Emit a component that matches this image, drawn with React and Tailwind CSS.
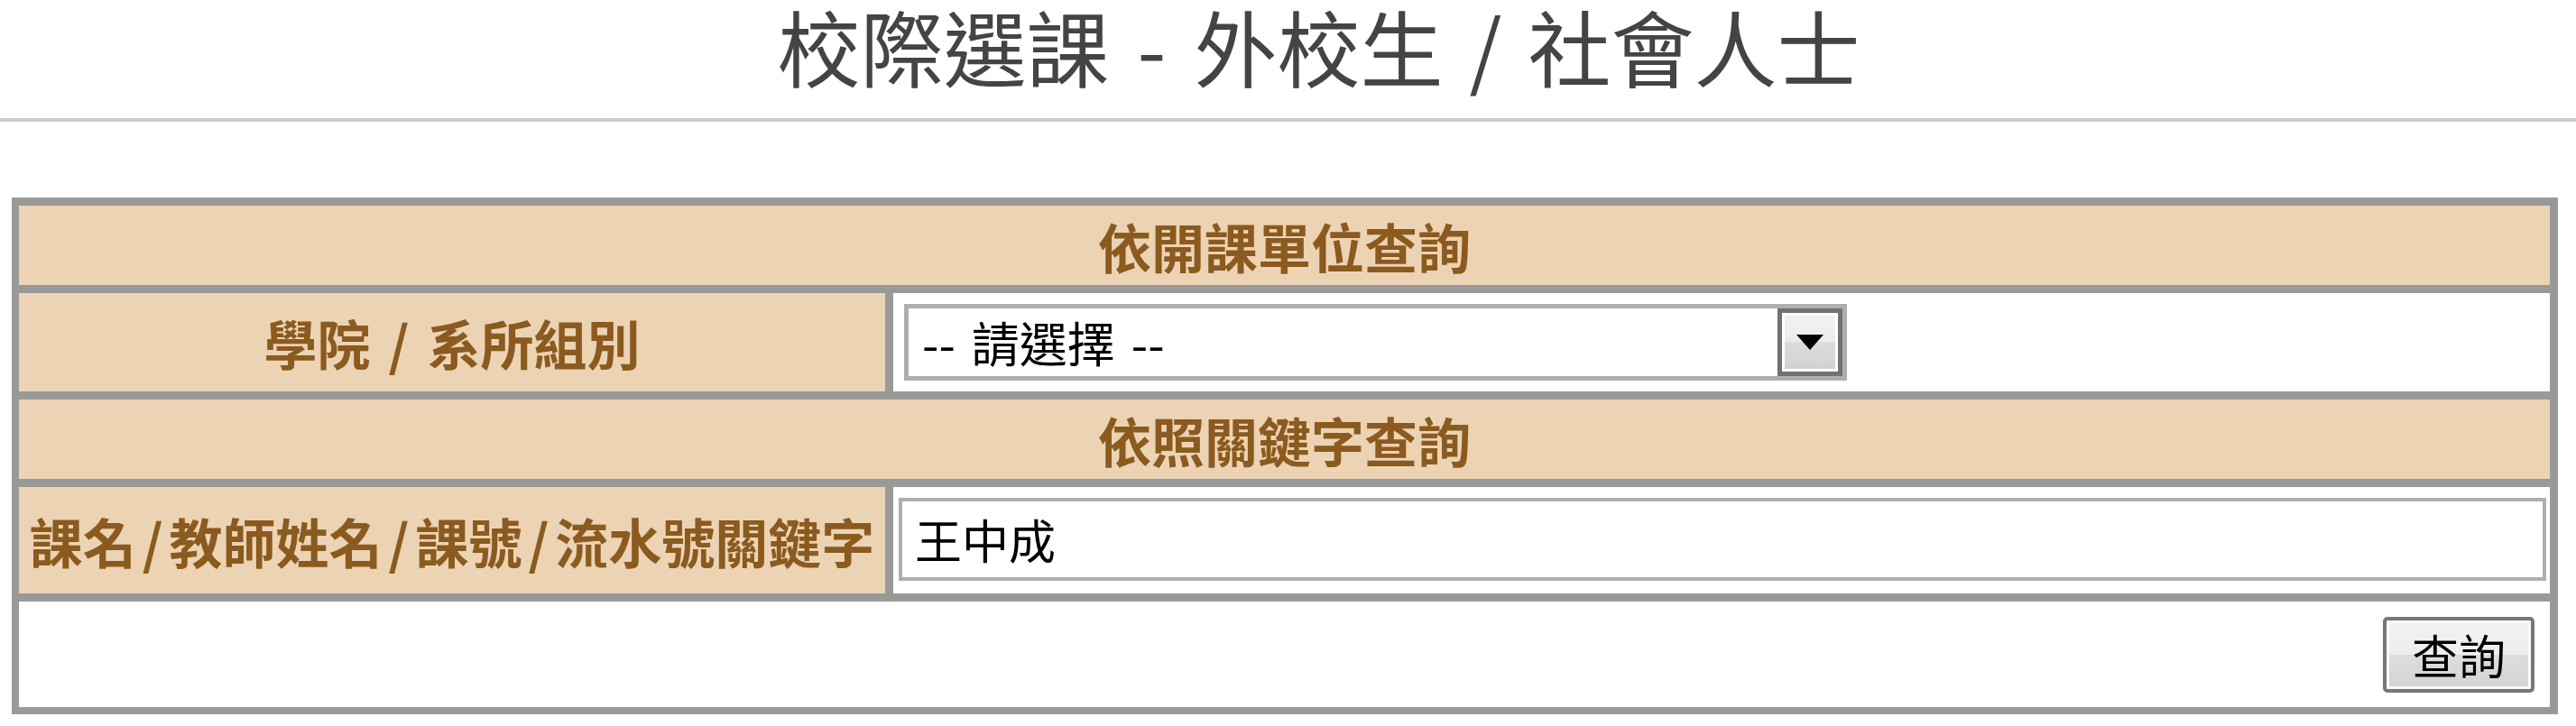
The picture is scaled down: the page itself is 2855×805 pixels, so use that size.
const label = "flex items-center justify-center bg-[#ebd3b4] text-[59px] font-bold leading-none text-[#8b5a1e]";

function Sep({ children, w }) {
  return <span className={w}>{children}</span>;
}

function FakeSelect() {
  return (
    <div className="flex h-[85px] w-[1045px] items-center border-[5px] border-[#adadb3] bg-white">
      <span className="flex flex-1 items-center gap-[18px] pl-[15px] text-[53px] leading-none text-black">
        <span>--</span>
        <span>請選擇</span>
        <span>--</span>
      </span>
      <div className="flex h-full w-[72px] items-center justify-center border-[5px] border-[#717171] bg-white p-[3px]">
        <div className="flex h-full w-full items-center justify-center bg-[linear-gradient(#f1f1f1_0%,#ececec_50%,#dcdcdc_50%,#d2d2d2_100%)]">
          <svg width="30" height="18" viewBox="0 0 30 18">
            <polygon points="0,0 30,0 15,17" fill="#000" />
          </svg>
        </div>
      </div>
    </div>
  );
}

export default function App() {
  return (
    <div className="min-h-screen bg-white" style={{ fontFamily: '"Noto Sans CJK TC", "Liberation Sans", sans-serif' }}>
      <div className="flex h-[135px] justify-center border-b-4 border-[#cccccc] pl-[68px]">
        <h1 className="flex text-[92px] font-normal leading-[100px] text-[#444444]">
          <span>校際選課</span>
          <Sep w="px-[31px]">-</Sep>
          <span>外校生</span>
          <Sep w="px-[29px]">/</Sep>
          <span>社會人士</span>
        </h1>
      </div>

      <div className="ml-[13px] mt-[84px] grid w-[2822px] grid-cols-[960px_1836px] grid-rows-[88px_109px_88px_118px_117px] gap-[9px] bg-[#999999] pb-[8px] pl-[8px] pr-[9px] pt-[9px]">
        <div className={`col-span-2 ${label}`}>依開課單位查詢</div>

        <div className={label}>
          學院<Sep w="px-[20px]">/</Sep>系所組別
        </div>
        <div className="flex items-center bg-white pl-[12px]">
          <FakeSelect />
        </div>

        <div className={`col-span-2 ${label}`}>依照關鍵字查詢</div>

        <div className={label}>
          課名<Sep w="px-[7px]">/</Sep>教師姓名<Sep w="px-[7px]">/</Sep>課號<Sep w="px-[7px]">/</Sep>流水號關鍵字
        </div>
        <div className="flex items-start bg-white pl-[6px] pr-[4px] pt-[12px]">
          <div className="flex h-[92px] w-full items-center border-4 border-[#adadb3] bg-white pl-[14px] text-[52px] leading-none text-black">
            王中成
          </div>
        </div>

        <div className="col-span-2 flex items-center justify-end bg-white pr-[17px]">
          <button className="flex h-[84px] w-[168px] items-center justify-center rounded-[5px] border-4 border-[#777777] bg-[linear-gradient(#f3f3f3_0%,#ededed_50%,#dddddd_50%,#d3d3d3_100%)] text-[52px] leading-none text-black shadow-[inset_0_0_0_3px_#fafafa]">
            查詢
          </button>
        </div>
      </div>
    </div>
  );
}
